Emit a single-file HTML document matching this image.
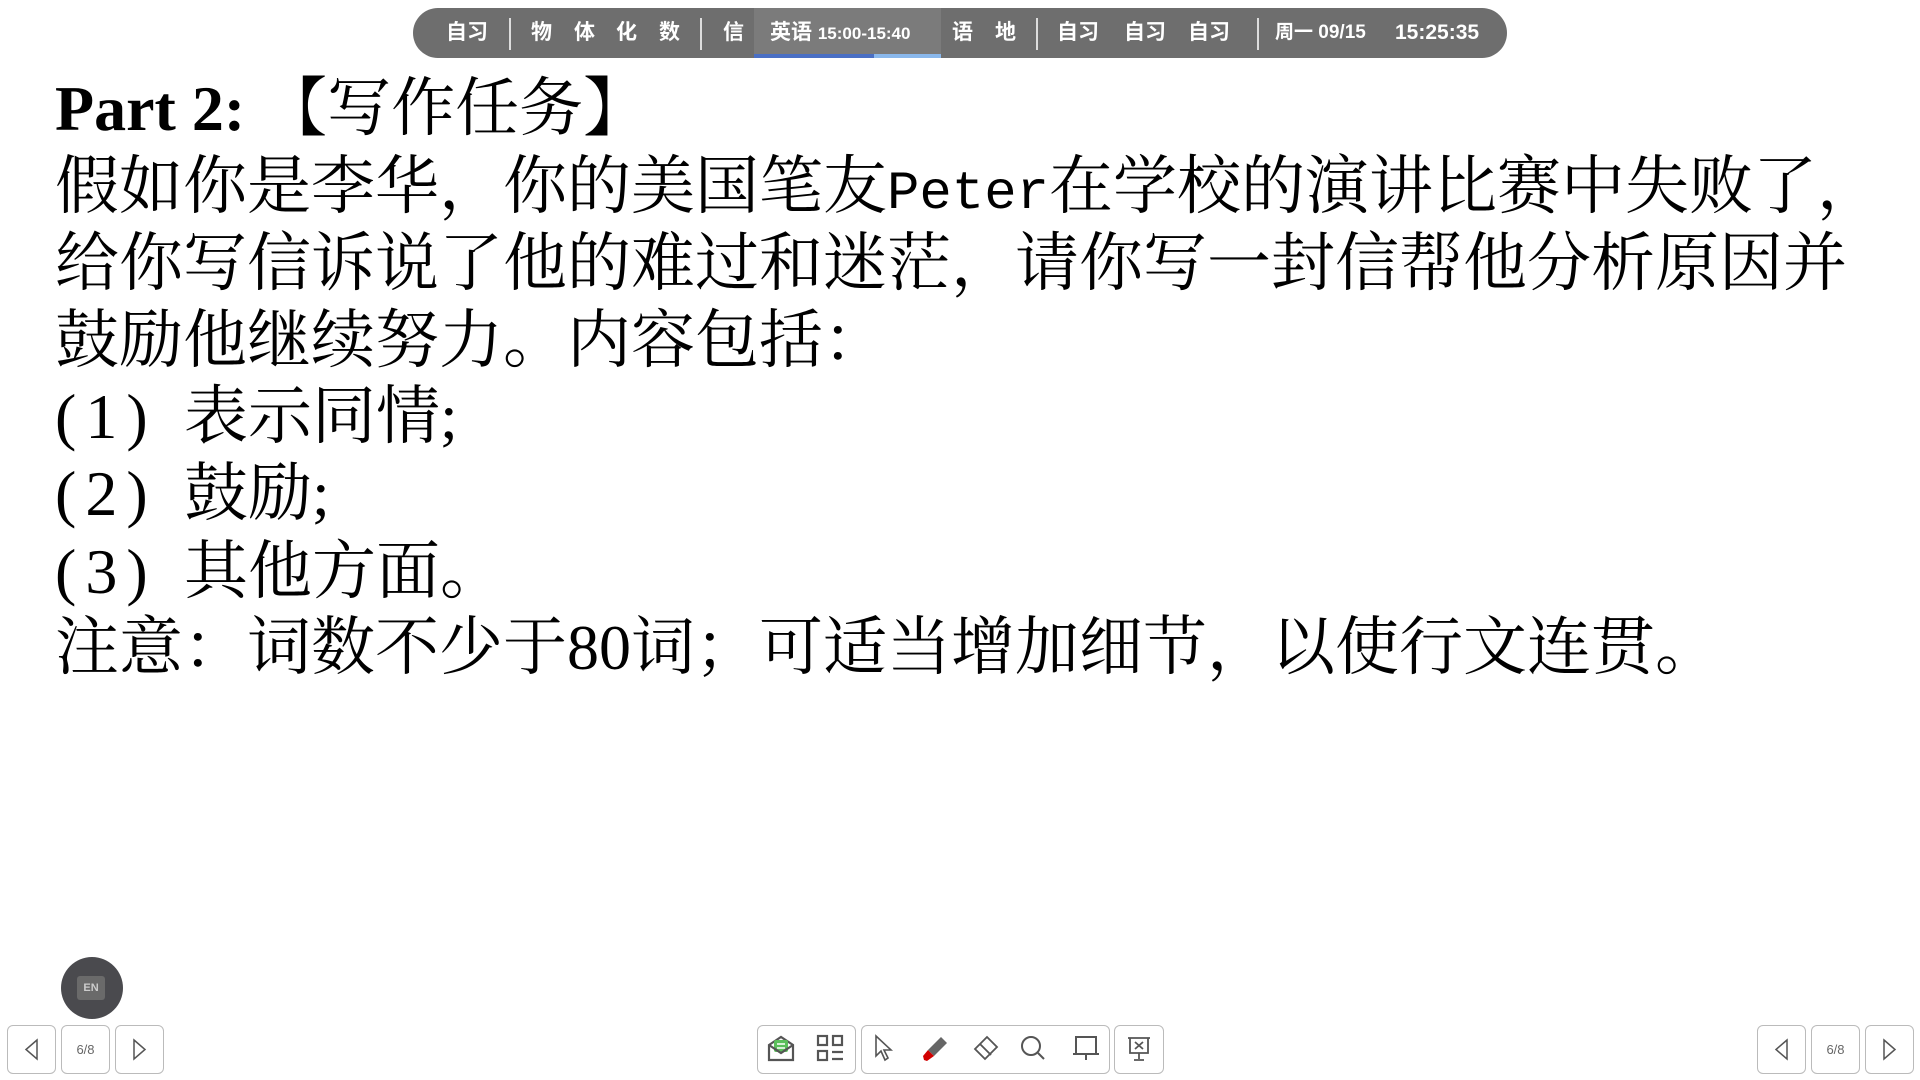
<!DOCTYPE html>
<html><head><meta charset="utf-8"><style>
body{margin:0;width:1920px;height:1080px;background:#fff;position:relative;overflow:hidden;font-family:"Liberation Serif","Noto Serif CJK SC","Noto Serif CJK JP",serif}
.bar{position:absolute;left:413px;top:8px;width:1094px;height:50px;background:#6e6e6e;border-radius:25px;overflow:hidden}
.t{position:absolute;top:0;height:50px;color:#fff;font:bold 21px "Liberation Sans","Noto Sans CJK SC",sans-serif;line-height:50px;white-space:nowrap}
.dv{position:absolute;top:10px;width:2px;height:32px;background:#ddd}
.ln{position:absolute;left:55px;height:77px;line-height:77px;font-size:64px;white-space:nowrap;color:#000}
.mono{font-family:"Liberation Mono",monospace;font-size:54px}
.num{display:inline-block;width:129px;letter-spacing:9px}
.btn{position:absolute;top:1025px;width:47px;height:47px;border:1px solid #bbb;border-radius:6px;background:#fff}
.pg{font:13px "Liberation Sans",sans-serif;line-height:47px;color:#666;text-align:center}
.ic{position:absolute;top:1034px}
</style></head><body>
<div class="bar">
 <div style="position:absolute;left:341px;top:0;width:187px;height:52px;background:#7b7b7b"></div>
 <div style="position:absolute;left:341px;top:46px;width:120px;height:6px;background:#4a6fc4"></div>
 <div style="position:absolute;left:461px;top:46px;width:67px;height:6px;background:#8ab8ec"></div>
 <div class="t" style="left:33px">自习</div>
 <div class="dv" style="left:96px"></div>
 <div class="t" style="left:118px">物</div>
 <div class="t" style="left:161px">体</div>
 <div class="t" style="left:203px">化</div>
 <div class="t" style="left:246px">数</div>
 <div class="dv" style="left:287px"></div>
 <div class="t" style="left:310px">信</div>
 <div class="t" style="left:357px">英语 <span style="font-size:17px">15:00-15:40</span></div>
 <div class="t" style="left:539px">语</div>
 <div class="t" style="left:582px">地</div>
 <div class="dv" style="left:623px"></div>
 <div class="t" style="left:644px">自习</div>
 <div class="t" style="left:711px">自习</div>
 <div class="t" style="left:775px">自习</div>
 <div class="dv" style="left:844px"></div>
 <div class="t" style="left:862px;font-size:19px">周一 09/15</div>
 <div class="t" style="left:982px">15:25:35</div>
</div>

<div class="ln" style="top:70px"><b style="font-weight:bold;font-size:64px">Part 2:</b><span style="margin-left:18px">【写作任务】</span></div>
<div class="ln" style="top:148px">假如你是李华，你的美国笔友<span class="mono">Peter</span>在学校的演讲比赛中失败了，</div>
<div class="ln" style="top:225px">给你写信诉说了他的难过和迷茫，请你写一封信帮他分析原因并</div>
<div class="ln" style="top:302px">鼓励他继续努力。内容包括：</div>
<div class="ln" style="top:378px"><span class="num">(1)</span>表示同情;</div>
<div class="ln" style="top:455px"><span class="num">(2)</span>鼓励;</div>
<div class="ln" style="top:533px"><span class="num">(3)</span>其他方面。</div>
<div class="ln" style="top:609px">注意：词数不少于80词；可适当增加细节，以使行文连贯。</div>

<div style="position:absolute;left:61px;top:957px;width:62px;height:62px;border-radius:50%;background:#4a4a4e"></div>
<div style="position:absolute;left:77px;top:976px;width:28px;height:24px;background:#6a6a6a;border-radius:3px;color:#ccc;font:bold 11px 'Liberation Sans',sans-serif;line-height:24px;text-align:center">EN</div>

<div class="btn" style="left:7px"><svg width="47" height="47"><path d="M29 14 L18 23.5 L29 33 Z" fill="none" stroke="#555" stroke-width="1.5"/></svg></div>
<div class="btn pg" style="left:61px">6/8</div>
<div class="btn" style="left:115px"><svg width="47" height="47"><path d="M18 14 L29 23.5 L18 33 Z" fill="none" stroke="#555" stroke-width="1.5"/></svg></div>
<div class="btn" style="left:1757px"><svg width="47" height="47"><path d="M29 14 L18 23.5 L29 33 Z" fill="none" stroke="#555" stroke-width="1.5"/></svg></div>
<div class="btn pg" style="left:1811px">6/8</div>
<div class="btn" style="left:1865px"><svg width="47" height="47"><path d="M18 14 L29 23.5 L18 33 Z" fill="none" stroke="#555" stroke-width="1.5"/></svg></div>

<div class="btn" style="left:757px;width:97px"></div>
<div class="btn" style="left:861px;width:247px"></div>
<div class="btn" style="left:1114px;width:48px"></div>

<svg class="ic" style="left:767px" width="28" height="28"><path d="M2 11 L14 3 L26 11 V26 H2 Z" fill="none" stroke="#555" stroke-width="2.2"/><rect x="7" y="6" width="14" height="12" rx="2" fill="#5bbf5b"/><path d="M10 10h8M10 14h8" stroke="#fff" stroke-width="1.5"/><path d="M2 11 L14 19 L26 11" fill="none" stroke="#555" stroke-width="2.2"/></svg>
<svg class="ic" style="left:816px" width="28" height="28"><g fill="none" stroke="#555" stroke-width="2.2"><rect x="2" y="2" width="9" height="9"/><rect x="17" y="2" width="9" height="9"/><rect x="2" y="17" width="9" height="9"/><path d="M16 18h11M16 25h11"/></g></svg>
<svg class="ic" style="left:871px" width="28" height="28"><path d="M5 2 L5 22 L10 17 L14 26 L17 24 L13 16 L20 16 Z" fill="none" stroke="#555" stroke-width="1.6"/></svg>
<svg class="ic" style="left:921px" width="28" height="28"><path d="M20 3 L26 9 L13 22 L7 16 Z" fill="#666"/><path d="M7 16 L13 22 L6 27 L3 26 L2 22 Z" fill="#d10000"/></svg>
<svg class="ic" style="left:971px" width="28" height="28"><path d="M16 3 L26 13 L14 25 L4 15 Z M9 10 L20 21" fill="none" stroke="#555" stroke-width="1.8"/></svg>
<svg class="ic" style="left:1019px" width="28" height="28"><circle cx="12" cy="12" r="9" fill="none" stroke="#555" stroke-width="2"/><path d="M19 19 L25 25" stroke="#555" stroke-width="2"/></svg>
<svg class="ic" style="left:1072px" width="28" height="28"><path d="M4 3h20v17H4z M1 20h26 M14 20v6" fill="none" stroke="#555" stroke-width="2"/></svg>
<svg class="ic" style="left:1125px" width="28" height="28"><path d="M3 4h22 M5 4v15h18V4 M14 19v6 M9 26h10 M10 8l8 7M18 8l-8 7" fill="none" stroke="#555" stroke-width="1.8"/></svg>
</body></html>
